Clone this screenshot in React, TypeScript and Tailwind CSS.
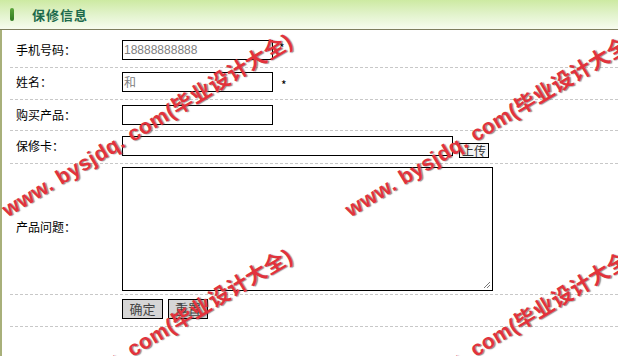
import React from 'react';

const cjk = { fontFamily: '"Noto Sans CJK SC", "Liberation Sans", sans-serif' };

const Watermark: React.FC<{ left: number; top: number }> = ({ left, top }) => (
  <div
    className="absolute whitespace-nowrap text-[21px] leading-[20px] tracking-[0.5px] font-bold text-[#e2323c] origin-bottom-left -rotate-[31deg] [text-shadow:1px_1px_1px_rgba(60,60,60,0.6)] pointer-events-none"
    style={{ left, top, fontFamily: '"Liberation Sans", "Noto Sans CJK SC", sans-serif' }}
  >
    www. bysjdq. com(毕业设计大全)
  </div>
);

const App: React.FC = () => {
  return (
    <div className="relative w-[618px] h-[356px] overflow-hidden bg-white text-[12px] text-black" style={cjk}>
      <div className="h-[30px] flex items-center border-b border-[#7e7e5e] bg-gradient-to-b from-[#cdeaa2] via-[#e2f3cc] to-[#f7fcef]">
        <div className="ml-[10px] w-[4px] h-[13px] rounded-sm bg-gradient-to-b from-[#5aa53a] to-[#2f7a22]" />
        <div className="ml-[18px] text-[13px] font-bold text-[#1d6a4c] tracking-[1px]">保修信息</div>
      </div>

      <div className="h-[326px] border-l-2 border-[#a8b07a] pt-[5px] pl-[8px]">
        <div className="h-[33px] pt-[5px] flex items-start border-b border-dashed border-[#c8c8c8]">
          <div className="w-[112px] h-[20px] flex items-center pl-[6px]">手机号码：</div>
          <div className="w-[151px] h-[20px] border border-black flex items-center pl-[1px] text-[#808080]" style={{ fontFamily: '"Liberation Sans", sans-serif' }}>18888888888</div>
          <div className="ml-[6px] mt-[2px] leading-[12px]">*</div>
        </div>

        <div className="h-[32px] pt-[4px] flex items-start border-b border-dashed border-[#c8c8c8]">
          <div className="w-[112px] h-[20px] flex items-center pl-[6px]">姓名：</div>
          <div className="w-[151px] h-[20px] border border-black flex items-center pl-[1px] text-[#808080]">和</div>
          <div className="ml-[8px] mt-[7px] leading-[12px]">*</div>
        </div>

        <div className="h-[31px] pt-[5px] flex items-start border-b border-dashed border-[#c8c8c8]">
          <div className="w-[112px] h-[20px] flex items-center pl-[6px]">购买产品：</div>
          <div className="w-[151px] h-[20px] border border-black" />
        </div>

        <div className="h-[33px] pt-[5px] flex items-start border-b border-dashed border-[#c8c8c8]">
          <div className="w-[112px] h-[20px] flex items-center pl-[6px]">保修卡：</div>
          <div className="w-[331px] h-[20px] border border-black" />
          <div className="ml-[6px] mt-[7px] w-[30px] h-[15px] border border-black bg-[#f4f4f4] flex items-center justify-center text-[12px] leading-[12px] text-[#333]">上传</div>
        </div>

        <div className="h-[131px] pt-[3px] flex items-start border-b border-dashed border-[#c8c8c8]">
          <div className="w-[112px] h-[120px] flex items-center pl-[6px]">产品问题：</div>
          <div className="relative w-[371px] h-[124px] border border-black">
            <svg className="absolute right-[1px] bottom-[1px]" width="9" height="9" viewBox="0 0 9 9">
              <path d="M8 2 L2 8 M8 5 L5 8" stroke="#777" strokeWidth="1" />
            </svg>
          </div>
        </div>

        <div className="h-[32px] pt-[4px] flex items-start gap-[5px] border-b border-dashed border-[#c8c8c8]">
          <div className="w-[107px]" />
          <div className="w-[41px] h-[20px] border border-black bg-[#d6d6d6] flex items-center justify-center text-[13px] text-[#444]">确定</div>
          <div className="w-[40px] h-[20px] border border-black bg-[#d6d6d6] flex items-center justify-center text-[13px] text-[#444]">重置</div>
        </div>
      </div>

      <Watermark left={9} top={200} />
      <Watermark left={352} top={200} />
      <Watermark left={9} top={415} />
      <Watermark left={352} top={415} />
    </div>
  );
};

export default App;
